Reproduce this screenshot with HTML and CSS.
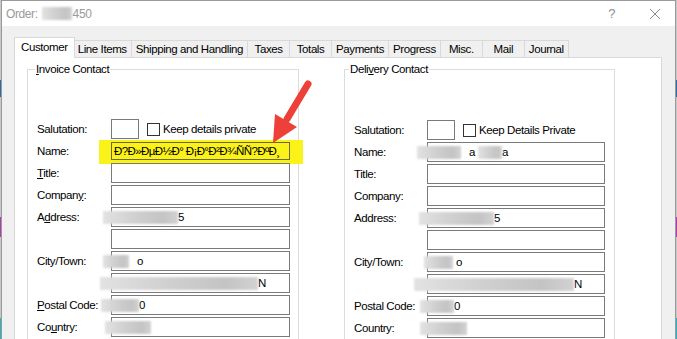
FILE: index.html
```html
<!DOCTYPE html>
<html lang="en">
<head>
  <meta charset="UTF-8">
  <meta name="viewport" content="width=device-width, initial-scale=1">
  <title>Order 450</title>
  <link rel="stylesheet" href="styles.css">
</head>
<body>
  <div class="screen">
    <div class="edge"></div>

    <div class="window">
      <div class="titlebar">
        <span class="title">Order: <span class="redact title-redact"></span>450</span>
        <span class="help">?</span>
        <svg class="close" width="12" height="12" viewBox="0 0 12 12">
          <path d="M1 1 L11 11 M11 1 L1 11" stroke="#8a8a8a" stroke-width="1" fill="none"/>
        </svg>
      </div>

      <div class="body">
        <ul class="tabs">
          <li class="active">Customer</li>
          <li>Line Items</li>
          <li>Shipping and Handling</li>
          <li>Taxes</li>
          <li>Totals</li>
          <li>Payments</li>
          <li>Progress</li>
          <li>Misc.</li>
          <li>Mail</li>
          <li>Journal</li>
        </ul>

        <div class="panel">
          <div class="groups">
            <fieldset class="group">
              <legend><u>I</u>nvoice Contact</legend>
              <div class="rows">
                <label>Salutation:</label>
                <div class="inline">
                  <span class="box small"></span>
                  <span class="check"></span>
                  <span>Keep details private</span>
                </div>

                <label>Name:</label>
                <div class="box marked">Ð?Ð»ÐµÐ½Ð° Ð¡Ð°Ð²Ð¾ÑÑ?ÐºÐ¸</div>

                <label><u>T</u>itle:</label>
                <div class="box"></div>

                <label>Compan<u>y</u>:</label>
                <div class="box"></div>

                <label>A<u>d</u>dress:</label>
                <div class="box"><span class="redact ml-11 w75"></span>5</div>

                <label></label>
                <div class="box"></div>

                <label>City/Town:</label>
                <div class="box"><span class="redact ml-11 w26 gap"></span>o</div>

                <label></label>
                <div class="box"><span class="redact ml-14 w158"></span>N</div>

                <label><u>P</u>ostal Code:</label>
                <div class="box"><span class="redact ml-13 w38"></span>0</div>

                <label>Co<u>u</u>ntry:</label>
                <div class="box"><span class="redact ml-9 w46"></span></div>
              </div>
            </fieldset>

            <fieldset class="group delivery">
              <legend>Deli<u>v</u>ery Contact</legend>
              <div class="rows">
                <label>Salutation:</label>
                <div class="inline">
                  <span class="box small"></span>
                  <span class="check"></span>
                  <span>Keep Details Private</span>
                </div>

                <label>Name:</label>
                <div class="box"><span class="redact ml-13 w44 gap"></span>a<span class="redact ml-3 w24"></span>a</div>

                <label>Title:</label>
                <div class="box"></div>

                <label>Company:</label>
                <div class="box"></div>

                <label>Address:</label>
                <div class="box"><span class="redact ml-11 w75"></span>5</div>

                <label></label>
                <div class="box"></div>

                <label>City/Town:</label>
                <div class="box"><span class="redact ml-6 w29 gap-s"></span>o</div>

                <label></label>
                <div class="box"><span class="redact ml-16 w160"></span>N</div>

                <label>Postal Code:</label>
                <div class="box"><span class="redact ml-10 w34"></span>0</div>

                <label>Country:</label>
                <div class="box"><span class="redact ml-10 w47"></span></div>
              </div>
            </fieldset>
          </div>
        </div>
      </div>
    </div>

    <div class="edge"></div>

    <svg class="arrow" width="677" height="339" viewBox="0 0 677 339">
      <line x1="308" y1="84" x2="287" y2="119" stroke="#ec4038" stroke-width="7" stroke-linecap="round"/>
      <polygon points="273,143 275,114 297,127" fill="#ec4038"/>
    </svg>
  </div>
</body>
</html>
```

FILE: styles.css
```css
body {
  margin: 0;
  font-family: 'Liberation Sans', Arial, sans-serif;
  font-size: 11.5px;
  letter-spacing: -0.4px;
  color: #000;
}
.screen {
  position: relative;
  display: flex;
  width: 677px;
  height: 339px;
  overflow: hidden;
}
.edge {
  width: 1px;
  flex: none;
  background: linear-gradient(to bottom,
    #c8c8c8 0, #c8c8c8 80px,
    #2a6ca8 80px, #2a6ca8 97px,
    #c8c8c8 97px, #c8c8c8 217px,
    #b03cb0 217px, #b03cb0 237px,
    #c8c8c8 237px, #c8c8c8 318px,
    #28b4c0 318px);
}
.window {
  width: 675px;
  flex: none;
  box-sizing: border-box;
  border: 1px solid #9a9a9a;
  border-bottom: none;
  background: #f0f0f0;
}

/* title bar */
.titlebar {
  height: 25px;
  background: #fff;
  display: flex;
  align-items: center;
  padding-left: 4px;
  color: #9a9a9a;
  font-size: 12px;
}
.title {
  flex: 1;
  display: flex;
  align-items: center;
}
.title-redact {
  width: 30px;
  height: 18px;
  margin: 0 1px 0 4px;
  background: #ebebeb;
  filter: none;
}
.help {
  margin-right: 34px;
  font-size: 13px;
  color: #8a8a8a;
}
.close {
  margin-right: 14px;
}

/* tabs */
.body {
  padding: 11px 13px 0 12px;
}
.tabs {
  list-style: none;
  margin: 0;
  padding: 0 0 0 2px;
  display: flex;
  align-items: flex-end;
  height: 20px;
}
.tabs li {
  box-sizing: border-box;
  height: 17px;
  min-width: 43px;
  padding: 0 4px;
  border: 1px solid #d9d9d9;
  border-bottom: none;
  margin-left: -1px;
  background: #f0f0f0;
  text-align: center;
  line-height: 16px;
  white-space: nowrap;
}
.tabs li.active {
  position: relative;
  z-index: 1;
  height: 21px;
  margin: 0 -2px -1px -2px;
  padding: 0 6px;
  background: #fff;
  line-height: 18px;
}
.tabs li.active + li {
  margin-left: 0;
}

/* panel */
.panel {
  height: 300px;
  background: #fff;
  border: 1px solid #d9d9d9;
  padding: 5px 0 0 12px;
}
.groups {
  display: flex;
  gap: 45px;
}
.group {
  margin: 0;
  width: 272px;
  box-sizing: border-box;
  border: 1px solid #dcdcdc;
  padding: 44px 8px 20px 9px;
}
.group legend {
  padding: 0 1px;
  margin-left: -2px;
}
.delivery {
  width: 271px;
  padding-top: 45px;
}
.delivery legend {
  margin-left: -5px;
}
.rows {
  display: grid;
  grid-template-columns: 74px 179px;
  grid-auto-rows: 20px;
  row-gap: 2px;
  align-items: center;
}
.delivery .rows {
  grid-template-columns: 73px 178px;
}
.box {
  box-sizing: border-box;
  height: 20px;
  border: 1px solid #7a7a7a;
  background: #fff;
  display: flex;
  align-items: center;
  padding-left: 2px;
  white-space: nowrap;
}
.box.small {
  width: 28px;
}
.box.marked {
  height: 18px;
  overflow: hidden;
  letter-spacing: -0.6px;
  background: #fbf21a;
  border-color: #6e6a2c;
  box-shadow: -9px 1px 0 3px #fbf21a, 10px 1px 0 3px #fbf21a;
}
.inline {
  display: flex;
  align-items: center;
}
.check {
  width: 13px;
  height: 13px;
  box-sizing: border-box;
  border: 1px solid #333;
  margin: 0 3px 0 8px;
}

/* redacted values */
.redact {
  display: inline-block;
  height: 13px;
  flex: none;
  background: linear-gradient(90deg, #e2e2e2, #cfcfcf 45%, #c4c4c4 80%, #d2d2d2);
  filter: blur(1px);
}
.gap { margin-right: 8px; }
.gap-s { margin-right: 3px; }
.ml-3 { margin-left: 3px; }
.ml-6 { margin-left: -6px; }
.ml-9 { margin-left: -9px; }
.ml-10 { margin-left: -10px; }
.ml-11 { margin-left: -11px; }
.ml-13 { margin-left: -13px; }
.ml-14 { margin-left: -14px; }
.ml-16 { margin-left: -16px; }
.w24 { width: 24px; }
.w26 { width: 26px; }
.w29 { width: 29px; }
.w34 { width: 34px; }
.w38 { width: 38px; }
.w44 { width: 44px; }
.w46 { width: 46px; }
.w47 { width: 47px; }
.w75 { width: 75px; }
.w158 { width: 158px; }
.w160 { width: 160px; }

/* annotation */
.arrow {
  position: absolute;
  left: 0;
  top: 0;
  pointer-events: none;
}
```
